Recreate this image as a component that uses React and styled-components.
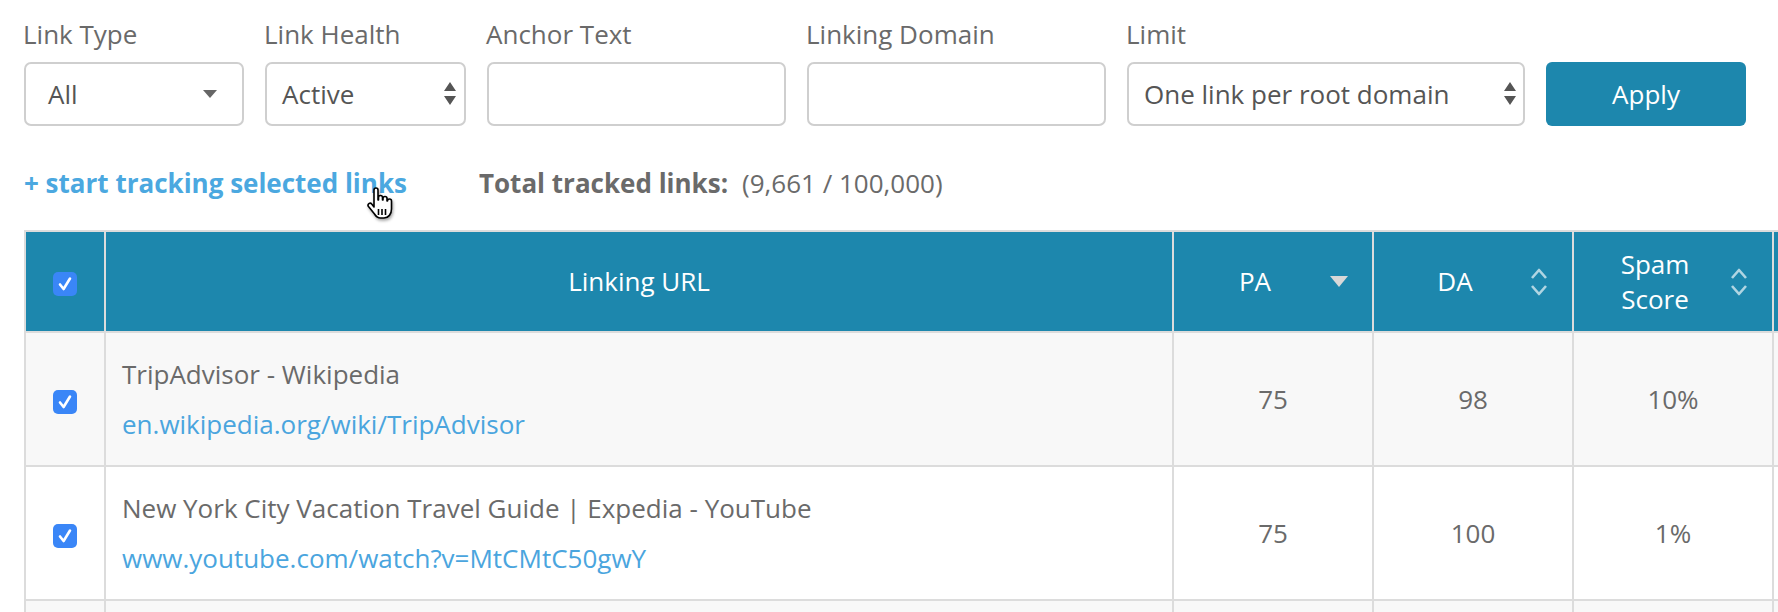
import React from "react";
import styled, { createGlobalStyle } from "styled-components";

const GlobalStyle = createGlobalStyle`
  body {
    margin: 0;
    background: #fff;
    font-family: "Open Sans", "Liberation Sans", sans-serif;
    color: #666;
    overflow: hidden;
  }
`;

const Page = styled.div`
  padding: 16px 0 0 24px;
`;

const Filters = styled.div`
  display: flex;
  align-items: flex-end;
  gap: 21px;
`;

const Field = styled.div`
  display: flex;
  flex-direction: column;
  width: ${(p) => p.$width}px;
`;

const Label = styled.div`
  font-size: 26px;
  line-height: 36px;
  color: #6a6a6a;
  margin-bottom: 10px;
  margin-left: -1px;
`;

const Box = styled.div`
  box-sizing: border-box;
  height: 64px;
  border: 2px solid #cfcfcf;
  border-radius: 7px;
  background: #fff;
  display: flex;
  align-items: center;
  justify-content: space-between;
  padding: 0 ${(p) => p.$right ?? 14}px 0 ${(p) => p.$left ?? 14}px;
  font-size: 26px;
  color: #555;
`;

const ApplyButton = styled.button`
  box-sizing: border-box;
  width: 200px;
  height: 64px;
  border: none;
  border-radius: 6px;
  background: #1d87ad;
  color: #fff;
  font-family: "Open Sans", "Liberation Sans", sans-serif;
  font-size: 26px;
  padding: 0;
`;

const TrackingBar = styled.div`
  position: relative;
  display: flex;
  align-items: baseline;
  margin-top: 39px;
  line-height: 36px;
  font-size: 26px;
`;

const TrackLink = styled.a`
  font-weight: 700;
  color: #4ba8e0;
  text-decoration: none;
`;

const Total = styled.div`
  margin-left: 72px;
  color: #6a6a6a;
  display: flex;
  gap: 14px;
  b {
    font-weight: 700;
  }
`;

const Cursor = styled.svg`
  position: absolute;
  left: 340px;
  top: 21px;
  width: 32px;
  height: 34px;
  filter: drop-shadow(1px 2px 1.5px rgba(0, 0, 0, 0.35));
`;

const TableWrap = styled.div`
  margin-top: 29px;
  overflow: hidden;
`;

const Table = styled.table`
  border-collapse: separate;
  border-spacing: 0;
  table-layout: fixed;
  width: 1950px;
  border-top: 2px solid #dcdcdc;
  border-left: 2px solid #dcdcdc;
  font-size: 26px;
`;

const Th = styled.th`
  box-sizing: border-box;
  width: ${(p) => p.$width}px;
  height: 101px;
  padding: 0;
  background: #1d87ad;
  color: #fff;
  font-weight: 400;
  line-height: 35px;
  border-right: 2px solid #dcdcdc;
  border-bottom: 2px solid #dcdcdc;
  vertical-align: middle;
`;

const HeadInner = styled.div`
  display: flex;
  align-items: center;
  justify-content: center;
  padding-left: 6px;
`;

const HeadLabel = styled.span`
  flex: 1;
  text-align: center;
`;

const SortIcon = styled.svg`
  width: 18px;
  flex: none;
  margin-right: 24px;
`;

const Row = styled.tr`
  background: ${(p) => (p.$alt ? "#f8f8f8" : "#fff")};
`;

const Td = styled.td`
  box-sizing: border-box;
  height: 134px;
  padding: 0 ${(p) => (p.$url ? "16px" : "0")};
  text-align: ${(p) => (p.$url ? "left" : "center")};
  vertical-align: middle;
  border-right: 2px solid #dcdcdc;
  border-bottom: 2px solid #dcdcdc;
  color: #6a6a6a;
  line-height: 50px;
  white-space: nowrap;
`;

const Check = styled.span`
  display: inline-flex;
  align-items: center;
  justify-content: center;
  width: 24px;
  height: 24px;
  border-radius: 5px;
  background: #3a86f7;
  vertical-align: middle;
`;

const Title = styled.div`
  color: #6a6a6a;
`;

const Url = styled.a`
  display: block;
  color: #4aa5de;
  text-decoration: none;
`;

const Checkbox = () => (
  <Check>
    <svg width="20" height="20" viewBox="0 0 20 20">
      <path d="M5 10.5l3.6 4.5L15 4.5" fill="none" stroke="#fff" strokeWidth="2.6" strokeLinecap="round" strokeLinejoin="round" />
    </svg>
  </Check>
);

const Caret = () => (
  <svg width="14" height="8" viewBox="0 0 14 8">
    <path d="M0 0h14L7 8z" fill="#666" />
  </svg>
);

const UpDown = () => (
  <svg width="12" height="24" viewBox="0 0 12 24">
    <path d="M6 0l6 9H0z M0 14h12l-6 9z" fill="#555" />
  </svg>
);

const SortDown = () => (
  <SortIcon height="12" viewBox="0 0 18 12">
    <path d="M0 0h18L9 11z" fill="#d8d8d8" />
  </SortIcon>
);

const SortBoth = () => (
  <SortIcon height="28" viewBox="0 0 18 28">
    <path d="M2 10l7-8 7 8M2 18l7 8 7-8" fill="none" stroke="rgba(255,255,255,0.65)" strokeWidth="2.6" strokeLinejoin="round" />
  </SortIcon>
);

const rows = [
  { title: "TripAdvisor - Wikipedia", url: "en.wikipedia.org/wiki/TripAdvisor", pa: 75, da: 98, spam: "10%" },
  { title: "New York City Vacation Travel Guide | Expedia - YouTube", url: "www.youtube.com/watch?v=MtCMtC50gwY", pa: 75, da: 100, spam: "1%" },
  { title: "", url: "", pa: "", da: "", spam: "" },
];

export default function App() {
  return (
    <Page>
      <GlobalStyle />
      <Filters>
        <Field $width={220}>
          <Label>Link Type</Label>
          <Box $left={22} $right={25}>
            <span>All</span>
            <Caret />
          </Box>
        </Field>
        <Field $width={201}>
          <Label>Link Health</Label>
          <Box $left={15} $right={8}>
            <span>Active</span>
            <UpDown />
          </Box>
        </Field>
        <Field $width={299}>
          <Label>Anchor Text</Label>
          <Box />
        </Field>
        <Field $width={299}>
          <Label>Linking Domain</Label>
          <Box />
        </Field>
        <Field $width={398}>
          <Label>Limit</Label>
          <Box $left={15} $right={7}>
            <span>One link per root domain</span>
            <UpDown />
          </Box>
        </Field>
        <ApplyButton>Apply</ApplyButton>
      </Filters>

      <TrackingBar>
        <TrackLink href="#">+ start tracking selected links</TrackLink>
        <Total>
          <b>Total tracked links:</b>
          <span>(9,661 / 100,000)</span>
        </Total>
        <Cursor viewBox="0 0 32 34">
          <path
            d="M10 4a2 2 0 0 1 4 0v10h.5v-2.5a2 2 0 0 1 4 0V14h.5v-1.5a2 2 0 0 1 4 0V15h.5a2 2 0 0 1 4 0v8c0 5-3 9-7.5 9h-3.5c-3 0-4.5-1.5-6-4L4.5 20.5a2 2 0 0 1 3.2-2.4L10 21z"
            fill="#fff"
            stroke="#000"
            strokeWidth="1.6"
            strokeLinejoin="round"
          />
          <path d="M14.5 23v6M18 23v6M21.5 23v6" stroke="#000" strokeWidth="1.6" />
        </Cursor>
      </TrackingBar>

      <TableWrap>
        <Table>
          <thead>
            <tr>
              <Th $width={80}>
                <Checkbox />
              </Th>
              <Th $width={1068}>Linking URL</Th>
              <Th $width={200}>
                <HeadInner>
                  <HeadLabel>PA</HeadLabel>
                  <SortDown />
                </HeadInner>
              </Th>
              <Th $width={200}>
                <HeadInner>
                  <HeadLabel>DA</HeadLabel>
                  <SortBoth />
                </HeadInner>
              </Th>
              <Th $width={200}>
                <HeadInner>
                  <HeadLabel>
                    Spam
                    <br />
                    Score
                  </HeadLabel>
                  <SortBoth />
                </HeadInner>
              </Th>
              <Th $width={200} />
            </tr>
          </thead>
          <tbody>
            {rows.map((r, i) => (
              <Row key={i} $alt={i % 2 === 0}>
                <Td>{r.title && <Checkbox />}</Td>
                <Td $url>
                  <Title>{r.title}</Title>
                  <Url href="#">{r.url}</Url>
                </Td>
                <Td>{r.pa}</Td>
                <Td>{r.da}</Td>
                <Td>{r.spam}</Td>
                <Td />
              </Row>
            ))}
          </tbody>
        </Table>
      </TableWrap>
    </Page>
  );
}
